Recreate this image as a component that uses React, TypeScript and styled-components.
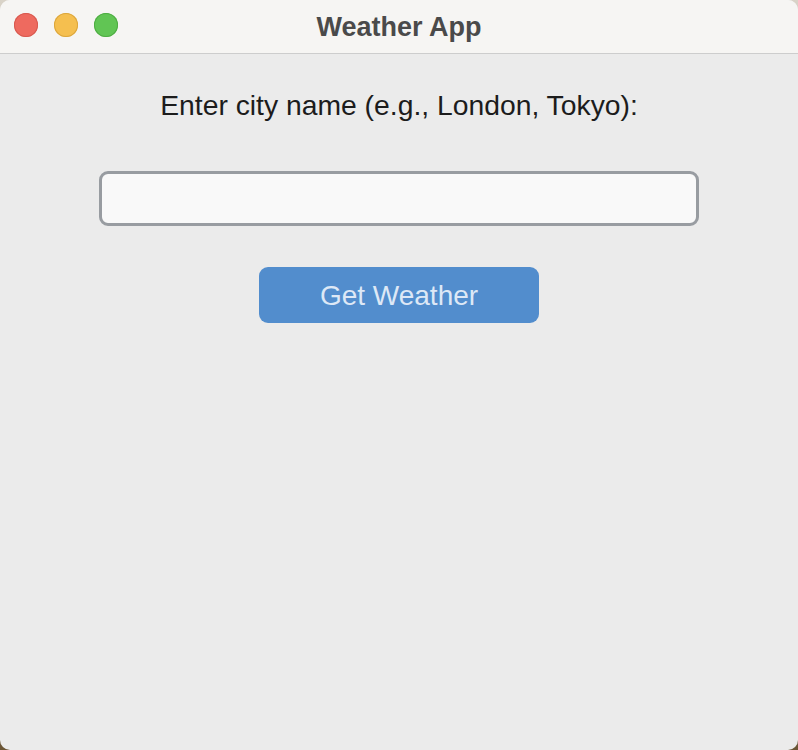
import React, { useState } from 'react';
import styled, { createGlobalStyle } from 'styled-components';

const GlobalStyle = createGlobalStyle`
  html, body {
    margin: 0;
    padding: 0;
    height: 100%;
  }
  body {
    background: linear-gradient(#d9d3c8, #6a5535);
    font-family: 'Liberation Sans', Arial, sans-serif;
  }
  #root {
    height: 100%;
  }
`;

const Window = styled.div`
  height: 750px;
  width: 798px;
  display: flex;
  flex-direction: column;
  border-radius: 10px;
  overflow: hidden;
  background: #ebebeb;
`;

const TitleBar = styled.div`
  position: relative;
  height: 53px;
  flex-shrink: 0;
  background: #f6f5f3;
  border-bottom: 1px solid #cdcdcd;
  display: flex;
  align-items: center;
  justify-content: center;
`;

const Lights = styled.div`
  position: absolute;
  left: 14px;
  top: 13px;
  display: flex;
  gap: 16px;
`;

const Light = styled.span<{ $fill: string; $edge: string }>`
  width: 24px;
  height: 24px;
  border-radius: 50%;
  background: ${(p) => p.$fill};
  box-shadow: inset 0 0 0 1px ${(p) => p.$edge};
`;

const Title = styled.div`
  font-size: 27px;
  font-weight: bold;
  color: #4a4a4a;
  margin-top: 1px;
`;

const Content = styled.div`
  flex: 1;
  display: flex;
  flex-direction: column;
  align-items: center;
  padding-top: 35px;
`;

const Label = styled.label`
  font-size: 28.3px;
  color: #1c1c1c;
  line-height: 32px;
`;

const CityInput = styled.input`
  box-sizing: border-box;
  margin-top: 50px;
  width: 600px;
  height: 55px;
  border: 3px solid #989ca1;
  border-radius: 9px;
  background: #f9f9f9;
  font-family: inherit;
  font-size: 22px;
  padding: 0 12px;
  outline: none;
`;

const Button = styled.button`
  margin-top: 41px;
  width: 280px;
  height: 56px;
  border: none;
  border-radius: 9px;
  background: #528dcd;
  color: #dde8f6;
  font-family: inherit;
  font-size: 28px;
  padding-top: 2px;
  cursor: pointer;
`;

const App: React.FC = () => {
  const [city, setCity] = useState('');

  return (
    <>
      <GlobalStyle />
      <Window>
        <TitleBar>
          <Lights>
            <Light $fill="#ee6a5f" $edge="#d75a50" />
            <Light $fill="#f5bf4f" $edge="#dba63d" />
            <Light $fill="#61c554" $edge="#4fac43" />
          </Lights>
          <Title>Weather App</Title>
        </TitleBar>
        <Content>
          <Label htmlFor="city">Enter city name (e.g., London, Tokyo):</Label>
          <CityInput id="city" value={city} onChange={(e) => setCity(e.target.value)} />
          <Button>Get Weather</Button>
        </Content>
      </Window>
    </>
  );
};

export default App;
